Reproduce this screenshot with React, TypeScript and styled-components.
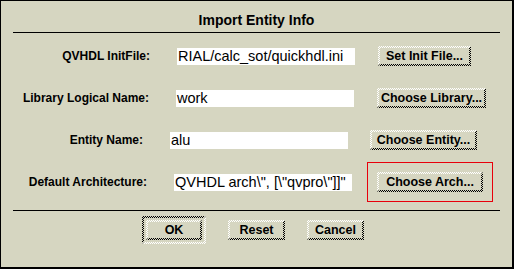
import styled, { createGlobalStyle, css } from 'styled-components';

const BG = '#d6d6c1';

const GlobalStyle = createGlobalStyle`
  html, body {
    margin: 0;
    padding: 0;
    background: ${BG};
  }
  body {
    font-family: "Liberation Sans", Arial, sans-serif;
    color: #000;
  }
`;

// 2px checkered bevel, like the old X toolkit stipple borders
const stipple = (topLeft: string, bottomRight: string) => css`
  position: relative;
  border: 2px solid ${BG};
  &::before,
  &::after {
    content: '';
    position: absolute;
    inset: -2px;
    pointer-events: none;
  }
  &::before {
    background: repeating-conic-gradient(${topLeft} 0 25%, transparent 0 50%) 0 0 / 2px 2px;
    clip-path: polygon(0 0, 100% 0, calc(100% - 2px) 2px, 2px 2px, 2px calc(100% - 2px), 0 100%);
  }
  &::after {
    background: repeating-conic-gradient(${bottomRight} 0 25%, transparent 0 50%) 0 0 / 2px 2px;
    clip-path: polygon(100% 0, 100% 100%, 0 100%, 2px calc(100% - 2px), calc(100% - 2px) calc(100% - 2px), calc(100% - 2px) 2px);
  }
`;

const Window = styled.div`
  box-sizing: border-box;
  width: 514px;
  height: 269px;
  background: ${BG};
  border-style: solid;
  border-color: #000;
  border-width: 1px 2px 2px 1px;
  padding: 0 12px 0 12px;
  display: flex;
  flex-direction: column;
`;

const Title = styled.div`
  font-size: 14px;
  font-weight: bold;
  line-height: 17px;
  text-align: center;
  padding: 11px 0 3px;
  border-bottom: 1px solid #000;
`;

const Form = styled.div`
  display: flex;
  flex-direction: column;
  padding-top: 2px;
`;

const Row = styled.div<{ $shift: number }>`
  height: 42px;
  display: flex;
  align-items: center;
  margin-left: ${(p) => p.$shift}px;
`;

const Label = styled.div`
  flex: none;
  width: 137px;
  text-align: right;
  font-size: 12px;
  font-weight: bold;
  line-height: 14px;
  margin-right: 25px;
`;

const Field = styled.div<{ $after: number }>`
  ${stipple('#000', '#fff')};
  box-sizing: border-box;
  flex: none;
  width: 182px;
  height: 21px;
  background: #fff;
  background-clip: padding-box;
  padding: 0 1px;
  font-size: 14.5px;
  line-height: 17px;
  white-space: pre;
  overflow: hidden;
  margin-right: ${(p) => p.$after}px;
`;

const Button = styled.div<{ $w: number }>`
  ${stipple('#fff', '#000')};
  box-sizing: border-box;
  flex: none;
  width: ${(p) => p.$w}px;
  height: 20px;
  font-size: 12.5px;
  font-weight: bold;
  line-height: 16px;
  text-align: center;
  white-space: nowrap;
  background: ${BG};
`;

const Highlight = styled.div`
  border: 1px solid #e8000b;
  padding: 9px;
`;

const Separator = styled.div`
  border-top: 1px solid #000;
  margin-top: 7px;
`;

const ButtonBar = styled.div`
  display: flex;
  align-items: center;
  gap: 22px;
  padding: 5px 0 0 129px;
`;

const DefaultFrame = styled.div`
  ${stipple('#000', '#fff')};
  padding: 2px;
`;

const rows = [
  { label: 'QVHDL InitFile:', value: 'RIAL/calc_sot/quickhdl.ini', button: 'Set Init File...', w: 93, shift: 0, after: 21 },
  { label: 'Library Logical Name:', value: 'work', button: 'Choose Library...', w: 109, shift: -1, after: 21 },
  { label: 'Entity Name:', value: 'alu', button: 'Choose Entity...', w: 107, shift: -7, after: 20 },
];

export default function App() {
  return (
    <>
      <GlobalStyle />
      <Window>
        <Title>Import Entity Info</Title>
        <Form>
          {rows.map((r) => (
            <Row key={r.label} $shift={r.shift}>
              <Label>{r.label}</Label>
              <Field $after={r.after}>{r.value}</Field>
              <Button $w={r.w}>{r.button}</Button>
            </Row>
          ))}
          <Row $shift={-3}>
            <Label>Default Architecture:</Label>
            <Field $after={13}>{'QVHDL arch\\", [\\"qvpro\\"]]"'}</Field>
            <Highlight>
              <Button $w={106}>Choose Arch...</Button>
            </Highlight>
          </Row>
        </Form>
        <Separator />
        <ButtonBar>
          <DefaultFrame>
            <Button $w={56}>OK</Button>
          </DefaultFrame>
          <Button $w={57}>Reset</Button>
          <Button $w={57}>Cancel</Button>
        </ButtonBar>
      </Window>
    </>
  );
}
